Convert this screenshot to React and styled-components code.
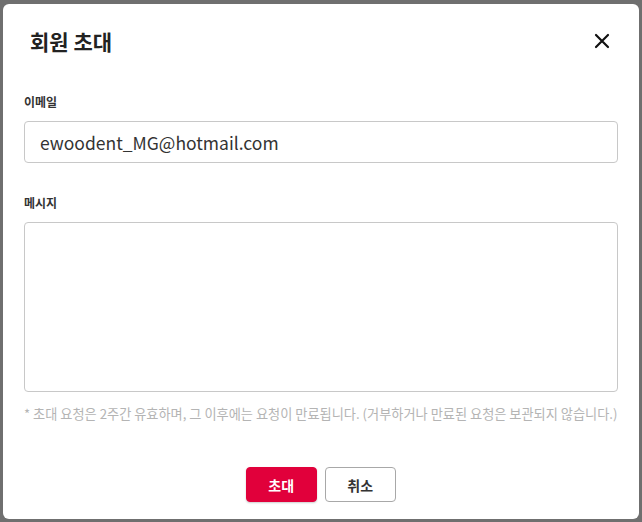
import React from "react";
import styled, { createGlobalStyle } from "styled-components";

const Global = createGlobalStyle`
  html, body { margin: 0; padding: 0; }
  body {
    background: #6f6f6f;
    font-family: "Noto Sans CJK KR", "Noto Sans", sans-serif;
  }
`;

const Backdrop = styled.div`
  width: 642px;
  height: 522px;
  box-sizing: border-box;
  padding: 4px 4px 3px 3px;
  display: flex;
`;

const Modal = styled.div`
  flex: 1;
  background: #fff;
  border-radius: 6px;
  display: flex;
  flex-direction: column;
  padding: 0 21px;
`;

const Header = styled.div`
  display: flex;
  align-items: center;
  justify-content: space-between;
  height: 74px;
  padding: 0 8px 0 6px;
`;

const Title = styled.h2`
  margin: 0;
  font-size: 21px;
  font-weight: 700;
  color: #222;
`;

const CloseButton = styled.button`
  border: none;
  background: none;
  padding: 0;
  width: 16px;
  height: 16px;
  display: flex;
  cursor: pointer;
`;

const Field = styled.div`
  display: flex;
  flex-direction: column;
  margin-top: ${(p) => p.$top}px;
`;

const Label = styled.label`
  font-size: 12px;
  font-weight: 700;
  color: #333;
  line-height: 18px;
  margin-bottom: 10px;
`;

const Input = styled.div`
  height: 42px;
  box-sizing: border-box;
  border: 1px solid #c8c8c8;
  border-radius: 4px;
  padding: 0 15px;
  display: flex;
  align-items: center;
  font-size: 17.5px;
  color: #333;
`;

const TextArea = styled.div`
  height: 170px;
  box-sizing: border-box;
  border: 1px solid #c8c8c8;
  border-radius: 4px;
`;

const Note = styled.p`
  margin: 13px 0 0 0;
  font-size: 13.2px;
  color: #b4b4b4;
  line-height: 18px;
  white-space: nowrap;
`;

const Footer = styled.div`
  display: flex;
  justify-content: center;
  gap: 8px;
  margin-top: 44px;
`;

const Button = styled.button`
  width: 71px;
  height: 35px;
  box-sizing: border-box;
  border-radius: 4px;
  font-family: inherit;
  font-size: 14px;
  font-weight: 700;
  cursor: pointer;
  border: 1px solid ${(p) => (p.$primary ? "#e1003b" : "#a8a8a8")};
  background: ${(p) => (p.$primary ? "#e1003b" : "#fff")};
  color: ${(p) => (p.$primary ? "#fff" : "#333")};
  box-shadow: ${(p) => (p.$primary ? "0 1px 2px rgba(0,0,0,0.2)" : "none")};
`;

export default function App() {
  return (
    <>
      <Global />
      <Backdrop>
        <Modal>
          <Header>
            <Title>회원 초대</Title>
            <CloseButton aria-label="닫기">
              <svg width="16" height="16" viewBox="0 0 16 16">
                <path d="M2 2 L14 14 M14 2 L2 14" stroke="#111" strokeWidth="2.2" strokeLinecap="round" />
              </svg>
            </CloseButton>
          </Header>
          <Field $top={15}>
            <Label>이메일</Label>
            <Input>ewoodent_MG@hotmail.com</Input>
          </Field>
          <Field $top={31}>
            <Label>메시지</Label>
            <TextArea />
          </Field>
          <Note>* 초대 요청은 2주간 유효하며, 그 이후에는 요청이 만료됩니다. (거부하거나 만료된 요청은 보관되지 않습니다.)</Note>
          <Footer>
            <Button $primary>초대</Button>
            <Button>취소</Button>
          </Footer>
        </Modal>
      </Backdrop>
    </>
  );
}
